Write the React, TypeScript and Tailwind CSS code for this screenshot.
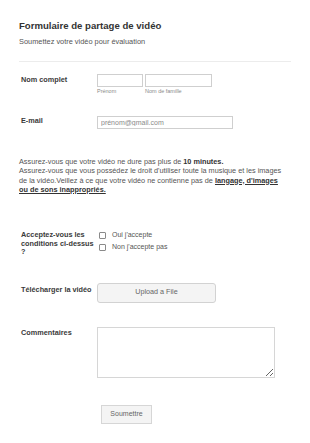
import React from "react";

const font = { fontFamily: '"Liberation Sans", Arial, sans-serif' };

const Label = ({
	children,
	className = "",
	leading = "leading-[10px]",
}: {
	children: React.ReactNode;
	className?: string;
	leading?: string;
}) => (
	<div className={`w-[78px] shrink-0 pl-[2px] text-[7.3px] ${leading} font-bold text-[#3a3a3a] ${className}`}>
		{children}
	</div>
);

const Checkbox = ({ text }: { text: string }) => (
	<label className="flex items-center h-[12px] gap-[6px]">
		<span className="w-[7px] h-[7px] border border-[#8a8a8a] rounded-[1px] bg-white shrink-0" />
		<span className="text-[7px] text-[#555]">{text}</span>
	</label>
);

export default function App() {
	return (
		<div className="w-[310px] h-[443px] bg-white px-[19px] pt-[20px] overflow-hidden" style={font}>
			{/* Header */}
			<h1 className="text-[9.6px] leading-[12px] font-bold text-[#333]">Formulaire de partage de vidéo</h1>
			<p className="mt-[5px] text-[7.4px] leading-[10px] text-[#555]">Soumettez votre vidéo pour évaluation</p>
			<div className="mt-[14px] h-px bg-[#ececec]" />

			{/* Nom complet */}
			<div className="mt-[12px] flex items-start">
				<Label className="pt-px">Nom complet</Label>
				<div className="flex gap-[2px]">
					<div className="flex flex-col">
						<input className="block w-[46px] h-[13px] border border-[#cfcfcf] bg-white outline-none" />
						<span className="mt-px text-[5.5px] leading-[7px] text-[#8a8a8a]">Prénom</span>
					</div>
					<div className="flex flex-col">
						<input className="block w-[67px] h-[13px] border border-[#cfcfcf] bg-white outline-none" />
						<span className="mt-px text-[5.5px] leading-[7px] text-[#8a8a8a]">Nom de famille</span>
					</div>
				</div>
			</div>

			{/* E-mail */}
			<div className="mt-[21px] flex items-start">
				<Label>E-mail</Label>
				<input
					className="block w-[136px] h-[13px] border border-[#cfcfcf] bg-white px-[3px] text-[7px] text-[#555] placeholder:text-[#8a8a8a] outline-none"
					placeholder="prénom@gmail.com"
					style={font}
				/>
			</div>

			{/* Conditions text */}
			<div className="mt-[28px] text-[7.3px] leading-[9.3px] text-[#555] whitespace-nowrap">
				<p>
					Assurez-vous que votre vidéo ne dure pas plus de <b className="text-[#333]">10 minutes.</b>
				</p>
				<p>
					Assurez-vous que vous possédez le droit d'utiliser toute la musique et les images
					<br />
					de la vidéo.Veillez à ce que votre vidéo ne contienne pas de{" "}
					<b className="underline text-[#333]">langage, d'images</b>
					<br />
					<b className="underline text-[#333]">ou de sons inappropriés.</b>
				</p>
			</div>

			{/* Acceptez */}
			<div className="mt-[37px] flex items-start">
				<Label leading="leading-[8.5px]" className="whitespace-nowrap">
					Acceptez-vous les
					<br />
					conditions ci-dessus
					<br />?
				</Label>
				<div className="flex flex-col -mt-[2px] ml-[2px]">
					<Checkbox text="Oui j'accepte" />
					<Checkbox text="Non j'accepte pas" />
				</div>
			</div>

			{/* Upload */}
			<div className="mt-[26px] flex items-start">
				<Label className="pt-[2px]">Télécharger la vidéo</Label>
				<button className="w-[119px] h-[20px] rounded-[3px] border border-[#d2d2d2] bg-[#f4f4f4] text-[7.2px] text-[#666]">
					Upload a File
				</button>
			</div>

			{/* Commentaires */}
			<div className="mt-[24px] flex items-start">
				<Label className="pt-px">Commentaires</Label>
				<textarea className="block w-[178px] h-[51px] border border-[#d6d6d6] bg-white outline-none" />
			</div>

			{/* Submit */}
			<div className="mt-[27px] pl-[82px]">
				<button className="block w-[51px] h-[19px] border border-[#d6d6d6] bg-[#f4f4f4] text-[7px] text-[#666]">Soumettre</button>
			</div>
		</div>
	);
}
